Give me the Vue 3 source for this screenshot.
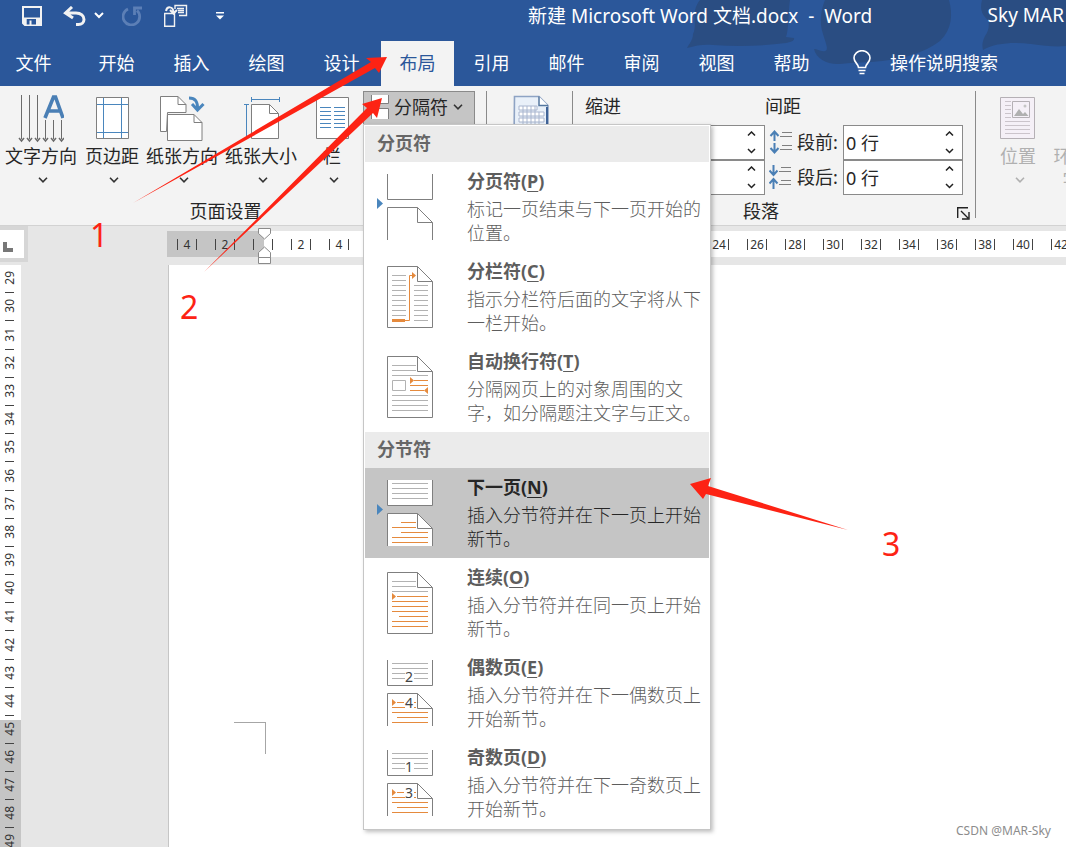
<script setup>
const tabs = ['文件', '开始', '插入', '绘图', '设计', '布局', '引用', '邮件', '审阅', '视图', '帮助']

const setup = [
  { id: 'direction', label: '文字方向' },
  { id: 'margins', label: '页边距' },
  { id: 'orientation', label: '纸张方向' },
  { id: 'size', label: '纸张大小' },
  { id: 'columns', label: '栏' },
]

const sections = [
  {
    title: '分页符',
    items: [
      { id: 'page', name: '分页符', key: 'P', text: '标记一页结束与下一页开始的位置。' },
      { id: 'column', name: '分栏符', key: 'C', text: '指示分栏符后面的文字将从下一栏开始。' },
      { id: 'wrap', name: '自动换行符', key: 'T', text: '分隔网页上的对象周围的文字，如分隔题注文字与正文。' },
    ],
  },
  {
    title: '分节符',
    items: [
      { id: 'next', name: '下一页', key: 'N', text: '插入分节符并在下一页上开始新节。', active: true },
      { id: 'continuous', name: '连续', key: 'O', text: '插入分节符并在同一页上开始新节。' },
      { id: 'even', name: '偶数页', key: 'E', text: '插入分节符并在下一偶数页上开始新节。', nums: [2, 4] },
      { id: 'odd', name: '奇数页', key: 'D', text: '插入分节符并在下一奇数页上开始新节。', nums: [1, 3] },
    ],
  },
]

const steps = [
  { name: '增加', d: 'M1 4.500l3.500-3.500L8 4.500' },
  { name: '减少', d: 'M1 1l3.500 3.500L8 1' },
]

// Marks behind the open menu keep their ticks but carry no number.
const covered = (m) => m > 4 && m < 24
const hMarks = [4, 2, '', ...Array.from({ length: 21 }, (_, i) => (i + 1) * 2).map((m) => (covered(m) ? '' : m))]
const vMarks = Array.from({ length: 16 }, (_, i) => 29 + i)
const vTail = Array.from({ length: 5 }, (_, i) => 45 + i)
</script>

<template>
  <div class="word">
    <header class="top">
      <svg class="art" viewBox="0 0 386 86" aria-hidden="true">
        <path d="M20 0C10 12 18 24 13 34c0 6-4 10-6 14 10-3 18-4 26-3 26 2 50 1 73-2 4-1 9-2 8-5l-8-1c3-8 2-24 4-37z" />
        <path d="M145 0c-4 10-6 22-2 34 3 10 6 16 2 17-4 1-8-2-11-2 2 10 14 16 26 15 14-2 28-1 42-3 20-2 42-8 58-20 12-12 13-26 9-41z" />
        <path d="M302 0c-3 12 2 16 6 20 2 6 0 12-3 16-3 6-3 10-2 14 12-7 30-8 48-6 14 2 26 3 35 2V0z" />
      </svg>
      <div class="titlebar">
        <div class="quick">
          <button class="qb save" aria-label="保存">
            <svg width="20" height="20" viewBox="0 0 20 20"><path fill-rule="evenodd" fill="#f2f2f2" d="M0 0h20v20H2.500L0 17.500zM2 2v9.500h16V2zM4.700 13v5.500H7.500V14.500h2V18.500h4.500V13z" /></svg>
          </button>
          <button class="qb undo" aria-label="撤消">
            <svg width="23" height="20" viewBox="0 0 23 20"><path d="M9 1L2.500 7 10 12M3 7h10c5 0 8 3 8 6.500 0 3-2.500 5-5.500 5H13" fill="none" stroke="#f2f2f2" stroke-width="3" /></svg>
          </button>
          <button class="qb" aria-label="撤消选项"><svg width="10" height="7" viewBox="0 0 10 7"><path d="M1 1l4 4 4-4" fill="none" stroke="#fff" stroke-width="2" /></svg></button>
          <button class="qb redo" aria-label="重复">
            <svg width="20" height="20" viewBox="0 0 20 20"><path d="M6 3A8.300 8.300 0 1 0 15 4.500M12.500 9V2H20" fill="none" stroke="#5c7fb6" stroke-width="2.800" /></svg>
          </button>
          <button class="qb layout" aria-label="版式">
            <svg width="24" height="24" viewBox="0 0 24 24" fill="none" stroke="#f2f2f2"><path d="M.7 9.500h9.800v12.800H.7zM11 5V1.500h11.500v10H15M13 4.500h7M14 6.500h6M14 8.500h6" stroke-width="1.400" /><path d="M2 7C3 2 9 2 9.500 8M6 6l3.500 3.500L13 6" stroke-width="2" /></svg>
          </button>
          <button class="qb more" aria-label="自定义"><svg width="8" height="8" viewBox="0 0 8 8" fill="#fff"><path d="M0 0h8v1.500H0zM0 3.500h8L4 7.500z" /></svg></button>
        </div>
        <div class="doc-title">新建 Microsoft Word 文档.docx&nbsp; -&nbsp; Word</div>
        <div class="user">Sky MAR</div>
      </div>
      <nav class="tabs">
        <button v-for="t in tabs" :key="t" class="tab" :class="{ on: t === '布局' }">{{ t }}</button>
        <button class="tell">
          <svg width="18" height="25" viewBox="0 0 18 25" fill="none" stroke="#fff" stroke-width="1.600"><path d="M5.500 17.500c0-3.500-4.500-5-4.500-9.500a8 7.300 0 0 1 16 0c0 4.500-4.500 6-4.500 9.500zM5.500 20.500h7M6.500 23.500h5" /></svg>
          <span>操作说明搜索</span>
        </button>
      </nav>
    </header>

    <section class="ribbon">
      <div class="group setup">
        <div class="row">
          <button v-for="b in setup" :key="b.id" class="big" :class="b.id">
            <svg v-if="b.id === 'direction'" width="46" height="48" viewBox="0 0 46 48" fill="none">
              <path d="M3.500 0v44M11.500 0v44M19.500 0v44M27.500 25v19M35.500 25v19M43.500 25v19" stroke="#6b6b6b" />
              <path d="M1 43l2.500 3L6 43M9 43l2.500 3 2.500-3M17 43l2.500 3 2.500-3M25 43l2.500 3 2.500-3M33 43l2.500 3 2.500-3M41 43l2.500 3 2.500-3" stroke="#6b6b6b" stroke-width="1.500" />
              <path d="M27 23L35.500 2h2L45 23M30 16h13" stroke="#4a7fb5" stroke-width="3.600" />
            </svg>
            <svg v-else-if="b.id === 'margins'" width="34" height="48" viewBox="0 0 34 48">
              <path d="M.5 2.500h32v41H.5z" fill="#fff" stroke="#7f7f7f" /><path d="M7.500 3v40M25.500 3v40M1 9.500h31M1 37.500h31" stroke="#4a86bd" fill="none" />
            </svg>
            <svg v-else-if="b.id === 'orientation'" width="46" height="48" viewBox="0 0 46 48">
              <path d="M6.500 36.500H.5v-35H18l8 8v8H7.500z" fill="#fff" stroke="#7f7f7f" /><path d="M18 1.500v8h8" fill="none" stroke="#7f7f7f" />
              <path d="M7.500 19.500H34l8 8v18H7.500z" fill="#fff" stroke="#7f7f7f" /><path d="M34 19.500v8h8" fill="none" stroke="#7f7f7f" />
              <path d="M29 3c6 0 9 3 8.500 12M32 9l5.500 6L43.500 9" fill="none" stroke="#4a86bd" stroke-width="3" />
            </svg>
            <svg v-else-if="b.id === 'size'" width="38" height="48" viewBox="0 0 38 48">
              <path d="M8.500 9.500h18l9 9v25h-27z" fill="#fff" stroke="#7f7f7f" /><path d="M26.500 9.500v9h9" fill="none" stroke="#7f7f7f" />
              <path d="M8.500 4.500h28M8.500 2v5M36.500 2v5M3.500 10v34M1 9.500h5" stroke="#4a86bd" fill="none" />
            </svg>
            <svg v-else width="34" height="48" viewBox="0 0 34 48">
              <path d="M.5 2.500h32v41H.5z" fill="#fff" stroke="#7f7f7f" /><path d="M4 12.500h11M4 16.500h11M4 20.500h11M4 24.500h11M4 28.500h11M4 32.500h11M18 12.500h11M18 16.500h11M18 20.500h11M18 24.500h11M18 28.500h11M18 32.500h11" stroke="#4a86bd" />
            </svg>
            <span>{{ b.label }}</span>
            <svg class="chev" width="10" height="6" viewBox="0 0 10 6"><path d="M1 .8l4 4 4-4" fill="none" stroke="#333" stroke-width="1.600" /></svg>
          </button>

          <div class="drop">
            <button class="breaks" aria-haspopup="true" aria-expanded="true">
              <svg width="20" height="24" viewBox="0 0 20 24" fill="#fff" stroke="#7f7f7f"><path d="M1.500 0v8.500h17V0M1.500 24V13.500h17V24" /></svg>
              <span>分隔符</span>
              <svg width="10" height="6" viewBox="0 0 10 6"><path d="M1 .8l4 4 4-4" fill="none" stroke="#333" stroke-width="1.600" /></svg>
            </button>
            <div class="menu" role="menu">
              <template v-for="s in sections" :key="s.title">
                <h3 class="head">{{ s.title }}</h3>
                <button v-for="i in s.items" :key="i.id" class="item" :class="{ active: i.active }" role="menuitem">
                  <svg class="glyph" width="58" height="68" viewBox="0 0 58 68" fill="none" stroke="#7f7f7f">
                    <template v-if="i.id === 'page'">
                      <path d="M10.500 0v25.500h45V0M10.500 66V33.500h30l15 15V66M40.500 33.500v15h15" fill="#fff" />
                      <path d="M0 24v11l6-5.500z" fill="#4a86bd" stroke="none" />
                    </template>
                    <template v-else-if="i.id === 'next'">
                      <path d="M10.500 0v25.500h45V0M10.500 66V33.500h30l15 15V66" fill="#fff" />
                      <path d="M40.500 33.500v15h15" />
                      <path d="M0 24v11l6-5.500z" fill="#4a86bd" stroke="none" />
                      <path d="M15 3.500h36M15 8.500h36M15 13.500h36M15 18.500h36" stroke="#b2b2b2" />
                      <path d="M24 42.500h15M15 47.500h24M24 52.500h27M15 57.500h36M15 62.500h36" stroke="#e58a3d" />
                    </template>
                    <template v-else-if="i.nums">
                      <path d="M10.500 0v25.500h45V0M10.500 66V33.500h30l15 15V66M40.500 33.500v15h15" fill="#fff" />
                      <path d="M15 3.500h36M15 8.500h36M15 13.500h13M37 13.500h14M15 18.500h13M37 18.500h14" stroke="#b2b2b2" />
                      <path d="M20 42.500h7M37 42.500h2M15 47.500h13M37 47.500h2M15 52.500h36M20 57.500h31M15 62.500h36" stroke="#e58a3d" />
                      <path d="M15 39v7l4-3.500z" fill="#e58a3d" stroke="none" />
                      <text x="32" y="22" class="gnum">{{ i.nums[0] }}</text>
                      <text x="32" y="48" class="gnum">{{ i.nums[1] }}</text>
                    </template>
                    <template v-else>
                      <path d="M10.500 2.500h30l15 15v46h-45zM40.500 2.500v15h15" fill="#fff" />
                      <template v-if="i.id === 'column'">
                        <path d="M15 11.500h14M15 16.500h14M15 21.500h14M15 26.500h14M15 31.500h14M15 36.500h14M15 41.500h14M15 46.500h14M15 51.500h14M37 21.500h14M37 26.500h14M37 31.500h14M37 36.500h14M37 41.500h14M37 46.500h14M37 51.500h14M37 56.500h14" stroke="#b2b2b2" />
                        <path d="M15 56.500h13" stroke="#e58a3d" stroke-width="3" /><path d="M28 56.500h4.500v-45H36" stroke="#e58a3d" /><path d="M35 8v7l4-3.500z" fill="#e58a3d" stroke="none" />
                      </template>
                      <template v-else-if="i.id === 'wrap'">
                        <path d="M15 11.500h24M15 16.500h24M15 21.500h36M15 41.500h36M15 46.500h36M15 51.500h36M15 56.500h36M15.500 26.500h13v10h-13z" stroke="#b2b2b2" />
                        <path d="M37 26.500h14M33 31.500h18M33 36.500h14" stroke="#e58a3d" /><path d="M33 23v7l4-3.500zM51 33v7l-4-3.500z" fill="#e58a3d" stroke="none" />
                      </template>
                      <template v-else>
                        <path d="M15 11.500h24M15 16.500h24M15 21.500h36" stroke="#b2b2b2" />
                        <path d="M20 26.500h31M15 31.500h36M15 36.500h36M15 41.500h36M22 46.500h29M15 51.500h36M15 56.500h36" stroke="#e58a3d" /><path d="M15 23v7l4-3.500z" fill="#e58a3d" stroke="none" />
                      </template>
                    </template>
                  </svg>
                  <span class="copy">
                    <strong>{{ i.name }}(<u>{{ i.key }}</u>)</strong>
                    <span>{{ i.text }}</span>
                  </span>
                </button>
              </template>
            </div>
          </div>
        </div>
        <div class="caption">页面设置</div>
      </div>

      <div class="group paper">
        <svg width="38" height="48" viewBox="0 0 38 48"><path d="M1.500 1.500H26l9 9V46h-34z" fill="#e9f0f9" stroke="#8ea3c4" stroke-width="1.600" /><path d="M34 12v34" stroke="#3f6397" stroke-width="2" /><path d="M26 1.500v9h9" fill="#fff" stroke="#55779f" stroke-width="1.500" /><path d="M6 11h18v4H6zM6 17h25v4H6zM6 23h25v4H6zM10 11v18M14 11v18M18 11v18M22 11v18M26 17v12" fill="#fff" stroke="#a9b6cf" /></svg>
      </div>

      <div class="group para">
        <div class="cols">
          <div class="col indent">
            <div class="lab">缩进</div>
            <div v-for="side in ['左缩进', '右缩进']" :key="side" class="field">
              <span class="spin"><input :aria-label="side"><span class="ud"><button v-for="s in steps" :key="s.name" :aria-label="s.name + side"><svg width="9" height="6" viewBox="0 0 9 6"><path :d="s.d" fill="none" stroke="#222" stroke-width="1.500" /></svg></button></span></span>
            </div>
          </div>
          <div class="col spacing">
            <div class="lab">间距</div>
            <div class="field">
              <label for="sb"><svg width="24" height="24" viewBox="0 0 24 24" fill="none"><path d="M5.500 11V2M1.500 6l4-4.500 4 4.500M5.500 13v9M1.500 18l4 4.500 4-4.500" stroke="#4a7fb5" stroke-width="2" /><path d="M13 2.500h10M11 6.500h12M13 15.500h10M11 19.500h12" stroke="#7f7f7f" /></svg>段前:</label>
              <span class="spin"><input id="sb" value="0 行"><span class="ud"><button v-for="s in steps" :key="s.name" :aria-label="s.name + '段前'"><svg width="9" height="6" viewBox="0 0 9 6"><path :d="s.d" fill="none" stroke="#222" stroke-width="1.500" /></svg></button></span></span>
            </div>
            <div class="field">
              <label for="sa"><svg width="24" height="24" viewBox="0 0 24 24" fill="none"><path d="M4.500 0v9M.5 5.500l4 4.500 4-4.500M4.500 24v-9M.5 18.500l4-4.500 4 4.500" stroke="#4a7fb5" stroke-width="2" /><path d="M12 2.500h10M10 6.500h12M12 15.500h10M10 19.500h12" stroke="#7f7f7f" /></svg>段后:</label>
              <span class="spin"><input id="sa" value="0 行"><span class="ud"><button v-for="s in steps" :key="s.name" :aria-label="s.name + '段后'"><svg width="9" height="6" viewBox="0 0 9 6"><path :d="s.d" fill="none" stroke="#222" stroke-width="1.500" /></svg></button></span></span>
            </div>
          </div>
        </div>
        <div class="caption">段落
          <button class="launch" aria-label="段落设置"><svg width="13" height="13" viewBox="0 0 13 13" fill="none" stroke="#222" stroke-width="1.400"><path d="M.7 11V.7H11M4 4l7 7M12 5v7H5" /></svg></button>
        </div>
      </div>

      <div class="group arrange">
        <button class="big dim">
          <svg width="36" height="48" viewBox="0 0 36 48" fill="none" stroke="#b5b0b5"><path d="M.5 2.500h34v41H.5z" fill="#f5f0f7" /><path d="M5 6.500h6M5 10.500h6M5 14.500h6M5 18.500h6M5 22.500h6M5 26.500h25M5 30.500h25M5 34.500h25M5 38.500h25" stroke="#cbc4cb" /><path d="M12.500 6.500h17v16h-17z" /><path d="M14 21l5-7 4 5 2-2 3.500 4z" fill="#b0b0b0" stroke="none" /><circle cx="25" cy="11" r="1.500" fill="#c5c5c5" stroke="none" /></svg>
          <span>位置</span>
          <svg class="chev" width="10" height="6" viewBox="0 0 10 6"><path d="M1 .8l4 4 4-4" fill="none" stroke="#b0b0b0" stroke-width="1.600" /></svg>
        </button>
        <button class="big dim wrapping">
          <svg width="24" height="48" viewBox="0 0 24 48"><path d="M.5 2.500h23v41H.5z" fill="#f5f0f7" stroke="#b5b0b5" /></svg>
          <span>环绕<br>字</span>
        </button>
      </div>
    </section>

    <main class="work">
      <div class="corner"><span class="corner-in"><svg width="10" height="10" viewBox="0 0 10 10"><path d="M0 0h4v6h6v4H0z" fill="#777" /></svg></span></div>
      <div class="hwrap">
        <div class="hruler">
          <span v-for="(m, n) in hMarks" :key="n" class="hc"><i>{{ m }}</i></span>
        </div>
        <svg class="handle" width="14" height="38" viewBox="0 0 14 38" fill="#fff" stroke="#8a8a8a"><path d="M.5 1.500h12v5L6.500 12 .5 6.500zM.5 30.500v-5l6-5.500 6 5.500v5zM.5 30.500h12v6H.5z" /></svg>
      </div>
      <div class="vruler">
        <div class="vw"><span v-for="m in vMarks" :key="m" class="vc"><i>{{ m }}</i></span></div>
        <div class="vg"><span v-for="m in vTail" :key="m" class="vc"><i>{{ m }}</i></span></div>
      </div>
      <div class="page"><span class="crop"></span></div>
    </main>

    <svg class="notes" width="1066" height="847" viewBox="0 0 1066 847" aria-hidden="true">
      <g fill="#fd2314">
        <path d="M133 203L371 62l-5-4L387 57l-8 16-4-5z" />
        <path d="M204 272L367 108l-5-4L382 98l-5 20-4-5z" />
        <path d="M848 530L706 494l-3 5L690 484l21-6-3 8z" />
      </g>
      <g class="digits"><text x="90" y="247">1</text><text x="180" y="319">2</text><text x="882" y="556">3</text></g>
    </svg>
    <div class="credit">CSDN @MAR-Sky</div>
  </div>
</template>

<style>
body { margin: 0; overflow: hidden; }
</style>

<style scoped>
.word { position: relative; display: flex; flex-direction: column; height: 100vh; overflow: hidden; background: #e6e6e6; color: #262626; font: 18px/24px "Noto Sans", "Noto Sans CJK SC", sans-serif; }
button { font: inherit; color: inherit; border: 0; background: none; padding: 0; margin: 0; }
svg { display: block; flex: none; }
h3 { margin: 0; }
.top { position: relative; background: #2b579a; color: #fff; }
.art { position: absolute; right: 0; top: 0; width: 386px; height: 86px; fill: #2a4d82; }
.titlebar { position: relative; display: flex; align-items: center; height: 41px; }
.quick { display: flex; align-items: center; height: 32px; padding-left: 22px; margin-bottom: 10px; width: 508px; flex: none; box-sizing: border-box; }
.undo { margin-left: 21px; }
.undo + .qb { margin-left: 8px; }
.redo { margin-left: 18px; }
.layout { margin-left: 22px; }
.more { margin-left: 28px; }
.doc-title { margin-left: 20px; margin-bottom: 10px; white-space: pre; font-size: 19px; }
.user { margin-left: auto; margin-bottom: 11px; margin-right: 2px; white-space: nowrap; font-size: 19px; }
.tabs { position: relative; display: flex; height: 45px; white-space: nowrap; }
.tab { width: 75px; padding-bottom: 2px; }
.tab:first-child { width: 79px; padding-right: 12px; }
.tab.on { background: #f3f3f3; color: #2b579a; width: 73px; margin-left: 2px; }
.tell { display: flex; align-items: center; gap: 19px; margin-left: 24px; padding-bottom: 2px; }
.ribbon { display: flex; height: 140px; background: #f3f3f3; border-bottom: 1px solid #d2d2d2; box-sizing: border-box; }
.group { position: relative; box-sizing: border-box; flex: none; display: flex; flex-direction: column; justify-content: space-between; padding: 5px 0 2px; }
.group::after { content: ""; position: absolute; right: 0; top: 5px; bottom: 7px; width: 1px; background: #8a8a8a; }
.setup { width: 487px; }
.row { display: flex; align-items: flex-start; padding-left: 5px; }
.big { display: flex; flex-direction: column; align-items: center; margin-top: 4px; margin-right: 7px; white-space: nowrap; }
.big span { margin-top: 1px; }
.big svg { margin-left: 2px; }
.direction svg:first-child { margin-left: 0; }
.big .chev { margin-top: 9px; margin-left: 3px; }
.direction { margin-right: 8px; }
.columns { width: 56px; margin-right: 3px; }
.caption { text-align: center; height: 24px; line-height: 24px; }
.setup .caption { padding-right: 36px; }
.drop { position: relative; }
.breaks { display: flex; align-items: center; gap: 4px; width: 112px; height: 34px; padding: 0 0 2px 6px; box-sizing: border-box; background: #c5c5c5; border: 1px solid #8a8a8a; }
.breaks svg:last-child { margin-left: 1px; }
.menu { position: absolute; z-index: 5; left: 0; top: 33px; width: 348px; box-sizing: border-box; background: #fff; border: 1px solid #c6c6c6; padding: 1px; box-shadow: 2px 2px 4px rgba(0, 0, 0, .25); color: #5d5d5d; }
.head { height: 36px; line-height: 34px; padding-left: 12px; background: #ebebeb; color: #666; font-size: 18px; }
.item { display: flex; width: 100%; height: 90px; padding: 7px 4px 0 12px; box-sizing: border-box; text-align: left; align-items: flex-start; }
.item.active { background: #c5c5c5; color: #262626; }
.glyph { margin-top: 5px; }
.copy { display: block; margin-left: 32px; flex: 1; }
.copy strong { display: block; line-height: 24px; margin-bottom: 4px; }
.copy > span { display: block; font-weight: 300; }
u { text-underline-offset: 3px; text-decoration-thickness: 1px; }
.gnum { font-size: 14px; fill: #444; stroke: none; text-anchor: middle; }
.paper { width: 86px; padding: 9px 0 0 26px; }
.para { width: 403px; }
.cols { display: flex; padding-left: 12px; }
.indent { width: 180px; }
.lab { height: 34px; line-height: 30px; }
.field { display: flex; align-items: center; justify-content: space-between; height: 35px; }
.indent .field { justify-content: flex-end; }
.spacing { width: 198px; }
.field label { display: flex; align-items: center; gap: 4px; margin-left: 4px; padding-bottom: 1px; white-space: nowrap; }
.spin { display: flex; width: 120px; height: 35px; box-sizing: border-box; border: 1px solid #8a8a8a; background: #fff; }
.spin input { flex: 1; min-width: 0; border: 0; outline: 0; padding: 0 0 0 2px; background: none; font: inherit; color: inherit; }
.ud { display: flex; flex-direction: column; width: 26px; flex: none; }
.ud button { flex: 1; display: flex; align-items: center; justify-content: center; }
.para .caption { padding-right: 27px; }
.launch { position: absolute; right: 6px; bottom: 5px; }
.arrange { flex: 1; min-width: 0; overflow: hidden; flex-direction: row; justify-content: flex-start; padding-left: 24px; }
.arrange::after { display: none; }
.dim { color: #b0b0b0; margin-right: 17px; align-self: flex-start; }
.dim svg { margin-left: 0; }
.wrapping svg { margin-left: 13px; }
.work { flex: 1; min-height: 0; display: grid; grid-template-columns: 21px 147px 1fr; grid-template-rows: 39px 1fr; overflow: hidden; }
.corner { grid-column: 1 / 3; grid-row: 1; border: solid #d6d6d6; border-width: 4px 4px 4px 0; width: 24px; height: 28px; background: #fff; }
.corner-in { display: flex; padding: 12px 0 0 3px; }
.hwrap { grid-column: 3; position: relative; min-width: 0; }
.hruler { display: flex; overflow: hidden; height: 26px; margin: 5px 0 0 -1px; background: linear-gradient(90deg, #c5c5c5 97px, #fff 97px); padding-left: 1px; }
.hc { flex: none; width: 38px; display: flex; align-items: center; justify-content: center; font-size: 12px; color: #333; }
.hc i { font-style: normal; width: 18px; height: 11px; line-height: 11px; text-align: center; border: solid #444; border-width: 0 1px; }
.handle { position: absolute; left: 90px; top: 1px; }
.vruler { grid-row: 2; grid-column: 1; overflow: hidden; display: flex; flex-direction: column; }
.vw { background: #fff; display: flex; flex-direction: column; flex: none; height: 451px; padding-bottom: 4px; }
.vc { flex: 1; position: relative; display: flex; align-items: center; justify-content: center; box-sizing: border-box; padding-bottom: 2px; font-size: 12px; line-height: 12px; color: #333; }
.vc::after { content: ""; position: absolute; left: 5px; width: 9px; bottom: 0; height: 1px; background: #444; }
.vc i { font-style: normal; writing-mode: vertical-rl; transform: rotate(180deg); margin-right: 2px; }
.vg { background: #c5c5c5; flex: 1; }
.vg .vc { height: 28px; }
.vg .vc:first-child { height: 24px; padding-bottom: 6px; }
.page { grid-row: 2; grid-column: 3; background: #fff; border-left: 1px solid #c6c6c6; padding: 457px 0 0 65px; box-sizing: border-box; }
.crop { display: block; width: 31px; height: 31px; border: solid #a6a6a6; border-width: 1px 1px 0 0; }
.notes { position: absolute; left: 0; top: 0; z-index: 9; pointer-events: none; }
.digits { font: 32px "Noto Sans", sans-serif; fill: #fd2314; }
.credit { position: absolute; right: 15px; bottom: 6px; font-size: 12px; line-height: 20px; color: #8c8c8c; }
</style>
